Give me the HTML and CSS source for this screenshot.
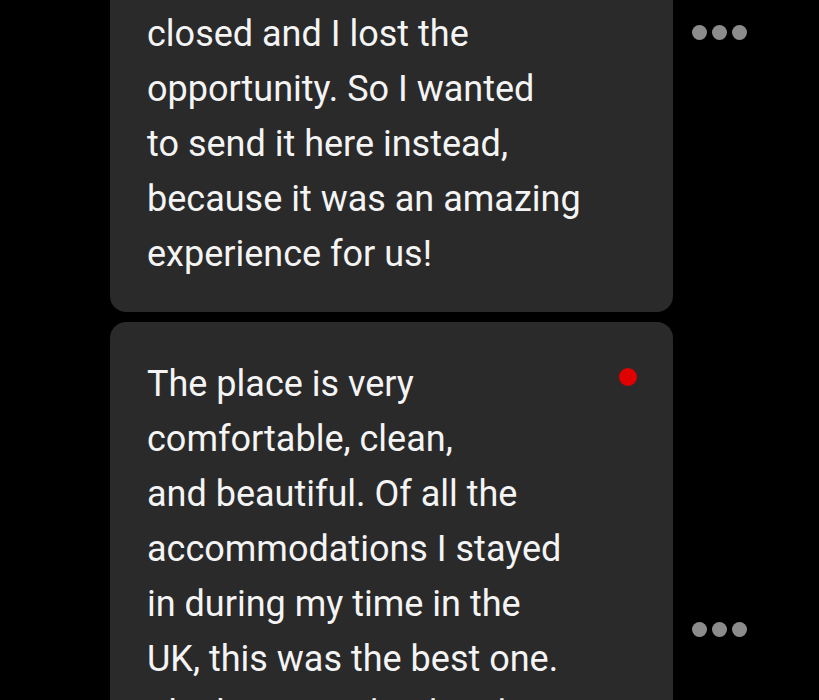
FILE: index.html
```html
<!DOCTYPE html>
<html lang="en">
<head>
    <meta charset="UTF-8">
    <meta name="viewport" content="width=device-width, initial-scale=1.0">
    <title>Messages</title>
    <link rel="stylesheet" href="styles.css">
</head>
<body>

<div class="thread">
    <!-- first message, scrolled partly out of view -->
    <div class="row">
        <div class="bubble">
            <p>
                Hello! We stayed with you<br>
                last month and I wanted<br>
                to leave a review, but the<br>
                booking page was already<br>
                closed and I lost the<br>
                opportunity. So I wanted<br>
                to send it here instead,<br>
                because it was an amazing<br>
                experience for us!
            </p>
        </div>
        <div class="more"><span></span><span></span><span></span></div>
    </div>

    <!-- second message -->
    <div class="row">
        <div class="bubble">
            <span class="unread"></span>
            <p>
                The place is very<br>
                comfortable, clean,<br>
                and beautiful. Of all the<br>
                accommodations I stayed<br>
                in during my time in the<br>
                UK, this was the best one.<br>
                The host was kind and<br>
                helpful with everything<br>
                we needed. Thank you<br>
                so much!
            </p>
        </div>
        <div class="more"><span></span><span></span><span></span></div>
    </div>
</div>

</body>
</html>
```

FILE: styles.css
```css
/* Geral */
html, body {
    height: 100%;
}

body {
    margin: 0;
    background: #000;
    font-family: Roboto, "Noto Sans", sans-serif;
    overflow: hidden;
}

/* Lista de mensagens (rolada) */
.thread {
    display: flex;
    flex-direction: column;
    gap: 10px;
    padding-left: 110px;
    margin-top: -248px;
}

.row {
    display: flex;
    align-items: center;
}

.bubble {
    position: relative;
    width: 563px;
    box-sizing: border-box;
    background: #2a2a2a;
    border-radius: 16px;
    padding: 35px 37px 30px 37px;
}

.bubble p {
    margin: 0;
    color: #f4f4f4;
    font-size: 36px;
    line-height: 55px;
}

/* Ponto vermelho de nao lido */
.unread {
    position: absolute;
    top: 46px;
    right: 36px;
    width: 18px;
    height: 18px;
    border-radius: 50%;
    background: #e00000;
}

/* Menu de tres pontos */
.more {
    display: flex;
    gap: 5px;
    margin-left: 19px;
}

.more span {
    width: 15px;
    height: 15px;
    border-radius: 50%;
    background: #8c8c8c;
}
```
